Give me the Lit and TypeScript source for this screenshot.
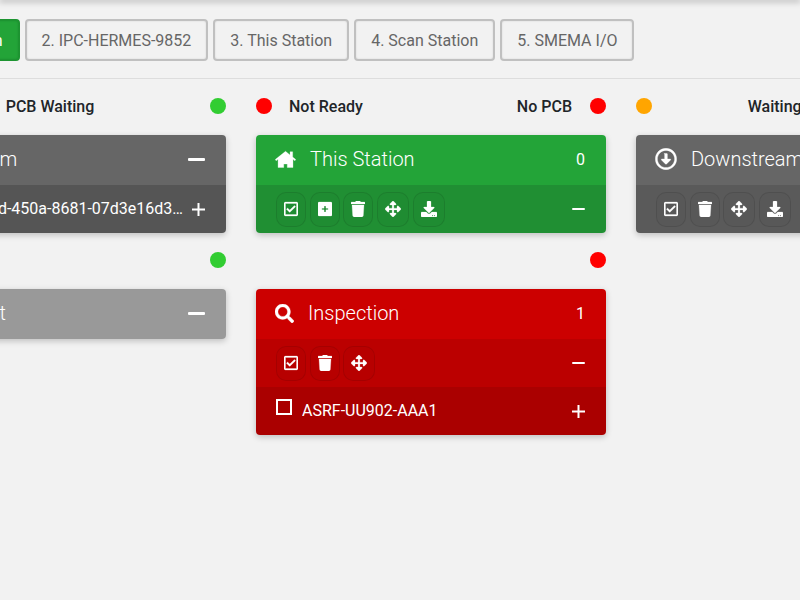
import { css, html, LitElement, nothing } from "lit";
import { customElement } from "lit/decorators.js";

type IconName =
  | "home"
  | "search"
  | "circleDown"
  | "check"
  | "plusSquare"
  | "trash"
  | "move"
  | "download";

const ICONS: Record<IconName, { w: number; d: string }> = {
  home: {
    w: 576,
    d: "M288 36L6 262L32 296L84 256V480H240V384H336V480H492V256L544 296L570 262L484 192V48H412V134Z",
  },
  search: {
    w: 512,
    d: "M505 442.7L405.3 343c-4.5-4.5-10.6-7-17-7H372c27.6-35.3 44-79.7 44-128C416 93.1 322.9 0 208 0S0 93.1 0 208s93.1 208 208 208c48.3 0 92.7-16.4 128-44v16.3c0 6.4 2.5 12.5 7 17l99.7 99.7c9.4 9.4 24.6 9.4 33.9 0l28.3-28.3c9.4-9.4 9.4-24.6.1-34zM208 336c-70.7 0-128-57.2-128-128 0-70.7 57.2-128 128-128 70.7 0 128 57.2 128 128 0 70.7-57.2 128-128 128z",
  },
  circleDown: {
    w: 512,
    d: "M256 8c137 0 248 111 248 248S393 504 256 504 8 393 8 256 119 8 256 8zm0 448c110.5 0 200-89.5 200-200S366.5 56 256 56 56 145.5 56 256s89.5 200 200 200zm-32-316v116h-67c-10.7 0-16 12.9-8.5 20.5l99 99c4.7 4.7 12.3 4.7 17 0l99-99c7.6-7.6 2.2-20.5-8.5-20.5h-67V140c0-6.6-5.4-12-12-12h-56c-6.6 0-12 5.4-12 12z",
  },
  check: {
    w: 448,
    d: "M400 32H48C21.49 32 0 53.49 0 80v352c0 26.51 21.49 48 48 48h352c26.51 0 48-21.49 48-48V80c0-26.51-21.49-48-48-48zm0 400H48V80h352v352zm-35.864-241.724L191.547 361.48c-4.705 4.667-12.303 4.637-16.97-.068l-90.781-91.516c-4.667-4.705-4.637-12.303.069-16.971l22.719-22.536c4.705-4.667 12.303-4.637 16.97.069l59.792 60.277 141.352-140.216c4.705-4.667 12.303-4.637 16.97.068l22.536 22.718c4.667 4.706 4.637 12.304-.068 16.971z",
  },
  // solid square with a small cross cut out
  plusSquare: {
    w: 448,
    d: "M36 32H412C432 32 448 48 448 68V444C448 464 432 480 412 480H36C16 480 0 464 0 444V68C0 48 16 32 36 32ZM196 160V232H124V280H196V352H252V280H324V232H252V160Z",
  },
  trash: {
    w: 448,
    d: "M432 32H312l-9.4-18.7A24 24 0 0 0 281.1 0H166.8a23.72 23.72 0 0 0-21.4 13.3L136 32H16A16 16 0 0 0 0 48v32a16 16 0 0 0 16 16h416a16 16 0 0 0 16-16V48a16 16 0 0 0-16-16zM53.2 467a48 48 0 0 0 47.9 45h245.8a48 48 0 0 0 47.9-45L416 128H32z",
  },
  move: {
    w: 512,
    d: "M352.201 425.775l-79.196 79.196c-9.373 9.373-24.568 9.373-33.941 0l-79.196-79.196c-15.119-15.119-4.411-40.971 16.971-40.97h51.162L228 284H127.196v51.162c0 21.382-25.851 32.09-40.971 16.971L7.029 272.937c-9.373-9.373-9.373-24.569 0-33.941L86.225 159.8c15.119-15.119 40.971-4.411 40.971 16.971V228H228V127.196h-51.23c-21.382 0-32.09-25.851-16.971-40.971l79.196-79.196c9.373-9.373 24.568-9.373 33.941 0l79.196 79.196c15.119 15.119 4.411 40.971-16.971 40.971h-51.162V228h100.804v-51.162c0-21.382 25.851-32.09 40.97-16.971l79.196 79.196c9.373 9.373 9.373 24.569 0 33.941L425.773 352.2c-15.119 15.119-40.971 4.411-40.97-16.971V284H284v100.804h51.23c21.382 0 32.09 25.851 16.971 40.971z",
  },
  download: {
    w: 512,
    d: "M216 0h80c13.3 0 24 10.7 24 24v168h87.7c17.8 0 26.7 21.5 14.1 34.1L269.7 378.3c-7.5 7.5-19.8 7.5-27.3 0L90.1 226.1c-12.6-12.6-3.7-34.1 14.1-34.1H192V24c0-13.3 10.7-24 24-24zm296 376v112c0 13.3-10.7 24-24 24H24c-13.3 0-24-10.7-24-24V376c0-13.3 10.7-24 24-24h146.7l49 49c20.1 20.1 52.5 20.1 72.6 0l49-49H488c13.3 0 24 10.7 24 24zm-124 88c0-11-9-20-20-20s-20 9-20 20 9 20 20 20 20-9 20-20zm64 0c0-11-9-20-20-20s-20 9-20 20 9 20 20 20 20-9 20-20z",
  },
};

const HEAD_ICON_SIZE: Partial<Record<IconName, number>> = {
  home: 18.7,
  search: 19,
  circleDown: 22,
};

type Dot = "green" | "red" | "orange" | "";

interface Station {
  left: Dot;
  right: Dot;
  labels: string[];
  tone: "green" | "dark" | "light" | "red";
  icon: IconName;
  title: string;
  count?: string;
  tools?: IconName[];
  item?: { text: string; checkbox: boolean };
}

const TABS = [
  "1. Upstream Station",
  "2. IPC-HERMES-9852",
  "3. This Station",
  "4. Scan Station",
  "5. SMEMA I/O",
];

const COLUMNS: Station[][] = [
  [
    {
      left: "",
      right: "green",
      labels: ["PCB Waiting"],
      tone: "dark",
      icon: "circleDown",
      title: "Upstream",
      item: { text: "5b7e20c4-a91d-450a-8681-07d3e16d3f2c", checkbox: false },
    },
    {
      left: "",
      right: "green",
      labels: [],
      tone: "light",
      icon: "search",
      title: "Test Unit",
    },
  ],
  [
    {
      left: "red",
      right: "red",
      labels: ["Not Ready", "No PCB"],
      tone: "green",
      icon: "home",
      title: "This Station",
      count: "0",
      tools: ["check", "plusSquare", "trash", "move", "download"],
    },
    {
      left: "",
      right: "red",
      labels: [],
      tone: "red",
      icon: "search",
      title: "Inspection",
      count: "1",
      tools: ["check", "trash", "move"],
      item: { text: "ASRF-UU902-AAA1", checkbox: true },
    },
  ],
  [
    {
      left: "orange",
      right: "",
      labels: ["Waiting for Board"],
      tone: "dark",
      icon: "circleDown",
      title: "Downstream",
      tools: ["check", "trash", "move", "download"],
    },
  ],
];

@customElement("app-root")
export class AppRoot extends LitElement {
  static override styles = css`
    :host {
      display: block;
      height: 600px;
      overflow: hidden;
      background: #f2f2f2;
      color: #212529;
      font-family: Roboto, "Liberation Sans", sans-serif;
      font-size: 16px;
    }

    .top-shadow {
      height: 0;
      box-shadow: 0 0 6px 1px rgba(0, 0, 0, 0.5);
    }

    .tabs {
      display: flex;
      gap: 5px;
      margin-left: -155.5px;
      padding: 19px 0 17px;
      white-space: nowrap;
    }

    .tab {
      flex: none;
      box-sizing: border-box;
      display: flex;
      align-items: center;
      height: 42px;
      padding: 0 15px;
      border: 2px solid #c0c0c0;
      border-radius: 4px;
      box-shadow: inset 0 0 2px rgba(0, 0, 0, 0.12);
      color: #666;
    }

    .tab.active {
      background: #23a438;
      border-color: #1d9431;
      color: #fff;
    }

    .divider {
      height: 1px;
      background: #ddd;
    }

    .board {
      display: grid;
      grid-template-columns: repeat(3, 350px);
      gap: 30px;
      margin-left: -124px;
      padding-top: 19px;
    }

    .column {
      display: flex;
      flex-direction: column;
      gap: 19px;
    }

    .status {
      display: grid;
      grid-template-columns: 16px 1fr 16px;
      grid-template-rows: 16px;
      align-items: center;
      margin-bottom: 21px;
      font-weight: 500;
    }

    .labels {
      display: flex;
      justify-content: center;
      padding-right: 2px;
      white-space: nowrap;
    }

    .labels.split {
      justify-content: space-between;
      padding: 0 18px 0 17px;
    }

    .dot {
      width: 16px;
      height: 16px;
      border-radius: 50%;
    }

    .dot.green { background: #32cd32; }
    .dot.red { background: #ff0000; }
    .dot.orange { background: #ffa500; }

    .card {
      border-radius: 4px;
      overflow: hidden;
      color: #fff;
      box-shadow: 0 2px 6px rgba(0, 0, 0, 0.22);
    }

    .card-head {
      box-sizing: border-box;
      display: flex;
      align-items: center;
      gap: 14px;
      height: 50px;
      padding: 0 21px 2px 19px;
      background: var(--head);
      font-size: 20px;
      font-weight: 300;
    }

    .card-title {
      flex: 1;
    }

    .count {
      font-size: 16px;
      font-weight: 400;
    }

    .tone-green { --head: #23a438; --tools: #208f33; --item: #1c802d; }
    .tone-dark { --head: #666666; --tools: #5a5a5a; --item: #555555; }
    .tone-light { --head: #999999; --tools: #8c8c8c; --item: #808080; }
    .tone-red { --head: #cc0000; --tools: #bb0000; --item: #aa0000; }

    .toolbar {
      box-sizing: border-box;
      display: flex;
      align-items: center;
      height: 48px;
      padding: 0 21px 0 20px;
      background: var(--tools);
    }

    .tools {
      flex: 1;
      display: flex;
      gap: 3.7px;
    }

    .tool {
      display: flex;
      align-items: center;
      justify-content: center;
      height: 33px;
      padding: 0 7px;
      border: 1px solid rgba(0, 0, 0, 0.1);
      border-radius: 10px;
      background: rgba(0, 0, 0, 0.02);
    }

    .item {
      box-sizing: border-box;
      display: flex;
      align-items: center;
      gap: 7px;
      height: 48px;
      padding: 0 21px 0 20px;
      background: var(--item);
    }

    .box {
      flex: none;
      box-sizing: border-box;
      width: 16px;
      height: 16px;
      margin: -8px 3px 0 0;
      border: 2px solid #fff;
    }

    .item-text {
      flex: 1;
      min-width: 0;
      padding-bottom: 2px;
      overflow: hidden;
      white-space: nowrap;
      text-overflow: ellipsis;
    }

    svg {
      flex: none;
      display: block;
      fill: currentColor;
    }

    /* the reference glyphs come out a little heavier than the bare paths */
    path {
      stroke: currentColor;
      stroke-width: 8;
    }
  `;

  private _icon(name: IconName, size: number) {
    const { w, d } = ICONS[name];
    return html`<svg
      viewBox="0 0 ${w} 512"
      width="${(w / 512) * size}"
      height="${size}"
    >
      <path d="${d}"></path>
    </svg>`;
  }

  private _minus(width: number, thick: number) {
    return html`<svg width="${width}" height="${thick}">
      <rect width="${width}" height="${thick}" rx="1"></rect>
    </svg>`;
  }

  private _plus() {
    return html`<svg width="13" height="13">
      <rect y="5.5" width="13" height="2"></rect>
      <rect x="5.5" width="2" height="13"></rect>
    </svg>`;
  }

  private _dot(color: Dot) {
    return html`<span class="dot ${color}"></span>`;
  }

  private _renderStation(s: Station) {
    const collapsible = s.count === undefined;
    return html`
      <div>
        <div class="status">
          ${this._dot(s.left)}
          <div class="labels ${s.labels.length > 1 ? "split" : ""}">
            ${s.labels.map((label) => html`<span>${label}</span>`)}
          </div>
          ${this._dot(s.right)}
        </div>
        <div class="card tone-${s.tone}">
          <div class="card-head">
            ${this._icon(s.icon, HEAD_ICON_SIZE[s.icon] ?? 19)}
            <span class="card-title">${s.title}</span>
            ${collapsible
              ? this._minus(17, 3)
              : html`<span class="count">${s.count}</span>`}
          </div>
          ${s.tools
            ? html`
              <div class="toolbar">
                <div class="tools">
                  ${s.tools.map(
                    (tool) =>
                      html`<span class="tool">${this._icon(tool, 16)}</span>`,
                  )}
                </div>
                ${this._minus(13, 2)}
              </div>
            `
            : nothing}
          ${s.item
            ? html`
              <div class="item">
                ${s.item.checkbox ? html`<span class="box"></span>` : nothing}
                <span class="item-text">${s.item.text}</span>
                ${this._plus()}
              </div>
            `
            : nothing}
        </div>
      </div>
    `;
  }

  override render() {
    return html`
      <div class="top-shadow"></div>
      <div class="tabs">
        ${TABS.map(
          (tab, i) =>
            html`<div class="tab ${i === 0 ? "active" : ""}">${tab}</div>`,
        )}
      </div>
      <div class="divider"></div>
      <div class="board">
        ${COLUMNS.map(
          (col) =>
            html`<div class="column">
              ${col.map((s) => this._renderStation(s))}
            </div>`,
        )}
      </div>
    `;
  }
}

declare global {
  interface HTMLElementTagNameMap {
    "app-root": AppRoot;
  }
}
